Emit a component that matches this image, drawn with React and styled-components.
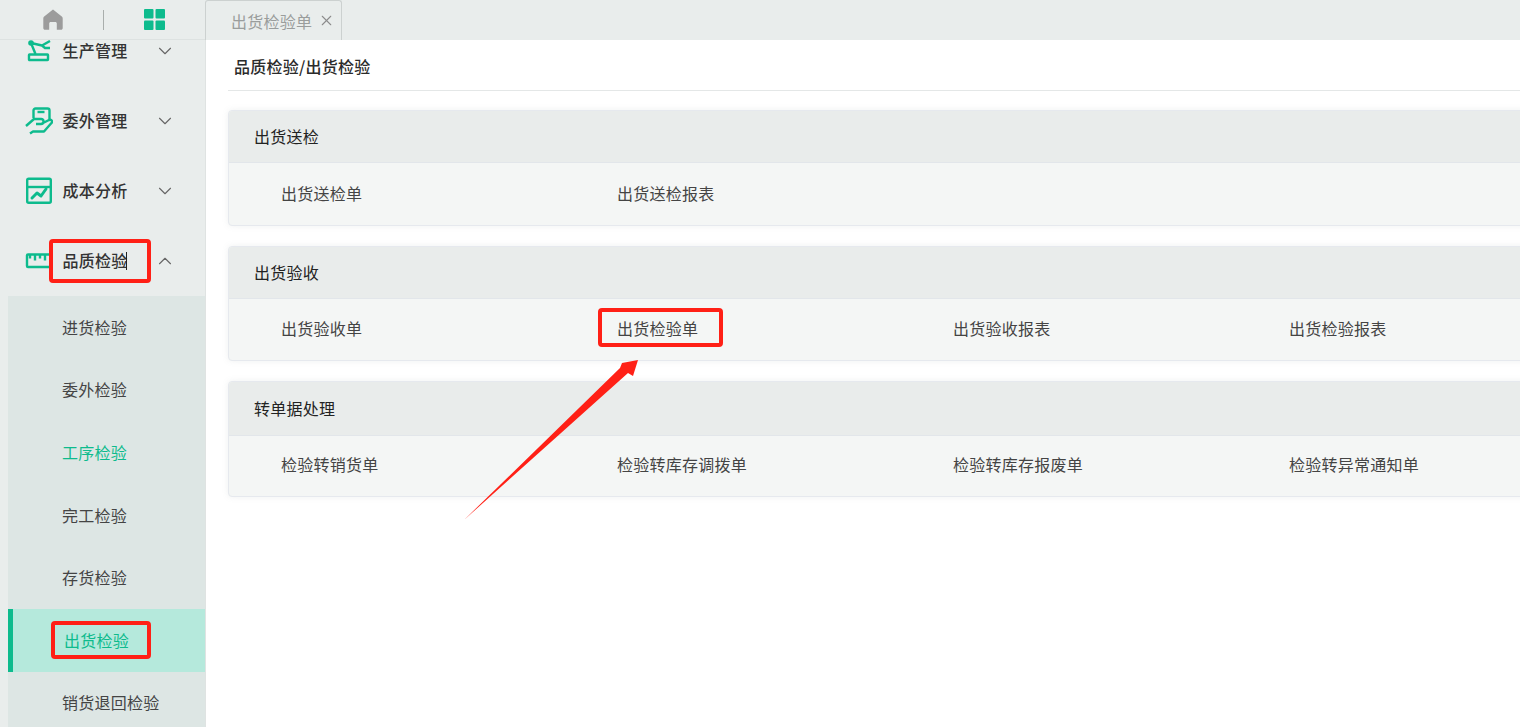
import styled, { createGlobalStyle } from 'styled-components';
import { ChevronDown, ChevronUp, X } from 'lucide-react';

const GlobalStyle = createGlobalStyle`
  html, body { margin: 0; padding: 0; height: 100%; overflow: hidden; background: #fff; }
  body { font-family: "Noto Sans CJK SC", "Noto Sans", sans-serif; font-size: 16px; letter-spacing: 0.25px; color: #333; }
`;

const GREEN = '#0dbb8d';
const RED = '#ff2016';

const Page = styled.div`
  position: relative;
  width: 1520px;
  height: 727px;
  overflow: hidden;
  display: flex;
  flex-direction: column;
`;

const TopBar = styled.header`
  height: 40px;
  flex-shrink: 0;
  display: flex;
  background: #e9edec;
`;

const TopTools = styled.div`
  width: 205px;
  flex-shrink: 0;
  display: flex;
  align-items: center;
  padding-left: 2px;
  border-bottom: 1px solid #dde2e1;
  box-sizing: border-box;
`;

const ToolCell = styled.div`
  flex: 1;
  display: flex;
  justify-content: center;
`;

const ToolDivider = styled.span`
  width: 1px;
  height: 20px;
  background: #a9aeac;
`;

const Tab = styled.div`
  width: 137px;
  height: 40px;
  box-sizing: border-box;
  display: flex;
  align-items: center;
  padding-left: 25px;
  gap: 6px;
  border: 1px solid #ccd1d0;
  border-bottom: none;
  border-radius: 3px 3px 0 0;
  color: #9a9d9c;
  white-space: nowrap;
`;

const Body = styled.div`
  flex: 1;
  min-height: 0;
  display: flex;
`;

const Sidebar = styled.aside`
  width: 206px;
  flex-shrink: 0;
  box-sizing: border-box;
  background: #e9edec;
  border-right: 1px solid #dfe3e2;
  overflow: hidden;
`;

const Menu = styled.nav`
  margin-top: -24px;
`;

const MenuItem = styled.div`
  position: relative;
  height: 70px;
  display: flex;
  align-items: center;
  padding-left: 25px;
  font-weight: 500;
  color: #333;
`;

const MenuIcon = styled.svg`
  width: 28px;
  height: 28px;
  flex-shrink: 0;
  fill: none;
  stroke: ${GREEN};
  stroke-width: 2.4;
  stroke-linejoin: round;
`;

const MenuLabel = styled.span`
  margin: -2px 0 0 9.5px;
  width: 91.5px;
  line-height: 18px;
  white-space: nowrap;
`;

const Caret = styled.span`
  position: absolute;
  left: 126px;
  top: 26px;
  width: 1px;
  height: 18px;
  background: #222;
`;

const SubMenu = styled.div`
  margin-left: 8px;
  background: #dde6e4;
`;

const SubItem = styled.div`
  position: relative;
  height: 62.6px;
  box-sizing: border-box;
  display: flex;
  align-items: center;
  padding-bottom: 1px;
  padding-left: ${p => (p.$selected ? '51px' : '54px')};
  color: ${p => (p.$selected || p.$active ? GREEN : '#444')};
  background: ${p => (p.$selected ? '#b5e9dc' : 'transparent')};
  border-left: ${p => (p.$selected ? `5px solid ${GREEN}` : 'none')};
`;

const Main = styled.main`
  flex: 1;
  min-width: 0;
  padding: 0 0 0 22px;
  overflow: hidden;
`;

const Breadcrumb = styled.div`
  height: 51px;
  box-sizing: border-box;
  border-bottom: 1px solid #e4e7e7;
  padding: 2px 0 0 6px;
  display: flex;
  align-items: center;
  font-weight: 500;
  color: #2b2b2b;
`;

const Sections = styled.div`
  width: 1400px;
  margin-top: 19px;
  display: flex;
  flex-direction: column;
  gap: 20px;
`;

const Card = styled.section`
  background: #f4f6f5;
  border: 1px solid #e6e9ee;
  border-radius: 4px;
  box-shadow: 0 0 6px rgba(120, 130, 130, 0.12);
`;

const CardTitle = styled.div`
  height: ${p => p.$height}px;
  box-sizing: border-box;
  padding: 0 0 2px 25px;
  display: flex;
  align-items: center;
  background: #e9eceb;
  border-bottom: 1px solid #e2e6ea;
  border-radius: 4px 4px 0 0;
  color: #222;
`;

const CardBody = styled.div`
  height: ${p => p.$height}px;
  box-sizing: border-box;
  padding: 0 0 ${p => p.$lift}px 52px;
  display: grid;
  grid-template-columns: repeat(4, 336px);
  align-items: center;
`;

const Link = styled.div`
  position: relative;
  color: #444;
  white-space: nowrap;
`;

const Highlight = styled.span`
  position: absolute;
  left: ${p => p.$left}px;
  top: ${p => p.$top}px;
  width: ${p => p.$width}px;
  height: ${p => p.$height}px;
  box-sizing: border-box;
  border: 4px solid ${RED};
  border-radius: 4px;
  pointer-events: none;
`;

const ArrowLayer = styled.svg`
  position: absolute;
  left: 0;
  top: 0;
  width: 1520px;
  height: 727px;
  pointer-events: none;
`;

const Home = () => (
  <svg width="20" height="21" viewBox="0 0 20 21">
    <path
      fill="#9c9c9c"
      d="M10 .5 1.200 7.600C.6 8.100.3 8.700.3 9.500V19c0 1.100.7 1.800 1.700 1.800h4.200V14.500c0-.9.6-1.500 1.500-1.500h4.600c.9 0 1.500.6 1.500 1.500v6.300H18c1 0 1.700-.7 1.700-1.800V9.500c0-.8-.3-1.400-.9-1.900z"
    />
  </svg>
);

const Apps = () => (
  <svg width="21" height="21" viewBox="0 0 21 21" fill={GREEN}>
    <rect x="0" y="0" width="9.500" height="9.500" rx="1" />
    <rect x="11.500" y="0" width="9.500" height="9.500" rx="1" />
    <rect x="0" y="11.500" width="9.500" height="9.500" rx="1" />
    <rect x="11.500" y="11.500" width="9.500" height="9.500" rx="1" />
  </svg>
);

const RobotIcon = () => (
  <MenuIcon viewBox="0 0 28 28">
    <circle cx="6" cy="6" r="2.800" fill={GREEN} stroke="none" />
    <path d="M6 6l4.500 11M6 6l11 2.500M17 8.500l8-4.500M17 8.500l3 2.500h5" />
    <rect x="4" y="17.500" width="19" height="5.500" rx="0.500" />
  </MenuIcon>
);

const HandIcon = () => (
  <MenuIcon viewBox="0 0 28 28">
    <path d="M8.500 11V3.500a2 2 0 0 1 2-2h12a2 2 0 0 1 2 2v9" />
    <path d="M12.500 5h7" />
    <path d="M1 19l8-7h7a2.500 2.500 0 0 1 0 5h-5M16 17l8-4c3-1 4 2 2 3.500l-7 8H8l-3 2" />
  </MenuIcon>
);

const ChartIcon = () => (
  <MenuIcon viewBox="0 0 28 28">
    <rect x="2.200" y="1.700" width="23.600" height="24" rx="1.500" />
    <path d="M2 10h24" />
    <path d="M7 21l5-5 4 3 5-7" strokeWidth="3" strokeLinecap="round" />
  </MenuIcon>
);

const RulerIcon = () => (
  <MenuIcon viewBox="0 0 28 28">
    <rect x="2" y="7.500" width="26" height="12.500" rx="1" />
    <path d="M5 7.500v4M10 7.500v6M15 7.500v4M20 7.500v6" strokeLinejoin="miter" />
  </MenuIcon>
);

const topMenus = [
  { label: '生产管理', icon: RobotIcon },
  { label: '委外管理', icon: HandIcon },
  { label: '成本分析', icon: ChartIcon },
];

const subMenus = ['进货检验', '委外检验', '工序检验', '完工检验', '存货检验', '出货检验', '销货退回检验'];

const sections = [
  { title: '出货送检', titleHeight: 52, height: 62, lift: 3, links: ['出货送检单', '出货送检报表'] },
  { title: '出货验收', titleHeight: 52, height: 61, lift: 4, links: ['出货验收单', '出货检验单', '出货验收报表', '出货检验报表'] },
  { title: '转单据处理', titleHeight: 54, height: 60, lift: 4, links: ['检验转销货单', '检验转库存调拨单', '检验转库存报废单', '检验转异常通知单'] },
];

export default function App() {
  return (
    <Page>
      <GlobalStyle />
      <TopBar>
        <TopTools>
          <ToolCell><Home /></ToolCell>
          <ToolDivider />
          <ToolCell><Apps /></ToolCell>
        </TopTools>
        <Tab>
          出货检验单
          <X size={17} strokeWidth={1.5} color="#8c8c8c" />
        </Tab>
      </TopBar>
      <Body>
        <Sidebar>
          <Menu>
            {topMenus.map(({ label, icon: Icon }) => (
              <MenuItem key={label}>
                <Icon />
                <MenuLabel>{label}</MenuLabel>
                <ChevronDown size={22} strokeWidth={1.2} color="#666" />
              </MenuItem>
            ))}
            <MenuItem>
              <RulerIcon />
              <MenuLabel>品质检验</MenuLabel>
              <ChevronUp size={22} strokeWidth={1.2} color="#666" />
              <Caret />
              <Highlight $left={49} $top={13} $width={102} $height={44} />
            </MenuItem>
            <SubMenu>
              {subMenus.map(name => (
                <SubItem key={name} $active={name === '工序检验'} $selected={name === '出货检验'}>
                  {name}
                  {name === '出货检验' && <Highlight $left={38} $top={12} $width={100} $height={38} />}
                </SubItem>
              ))}
            </SubMenu>
          </Menu>
        </Sidebar>
        <Main>
          <Breadcrumb>品质检验/出货检验</Breadcrumb>
          <Sections>
            {sections.map(section => (
              <Card key={section.title}>
                <CardTitle $height={section.titleHeight}>{section.title}</CardTitle>
                <CardBody $height={section.height} $lift={section.lift}>
                  {section.links.map(link => (
                    <Link key={link}>
                      {link}
                      {link === '出货检验单' && <Highlight $left={-19} $top={-8} $width={125} $height={39} />}
                    </Link>
                  ))}
                </CardBody>
              </Card>
            ))}
          </Sections>
        </Main>
      </Body>
      <ArrowLayer viewBox="0 0 1520 727">
        <polygon fill={RED} points="464,520 620,368 622,363 638,360 633,376 628,373" />
      </ArrowLayer>
    </Page>
  );
}
